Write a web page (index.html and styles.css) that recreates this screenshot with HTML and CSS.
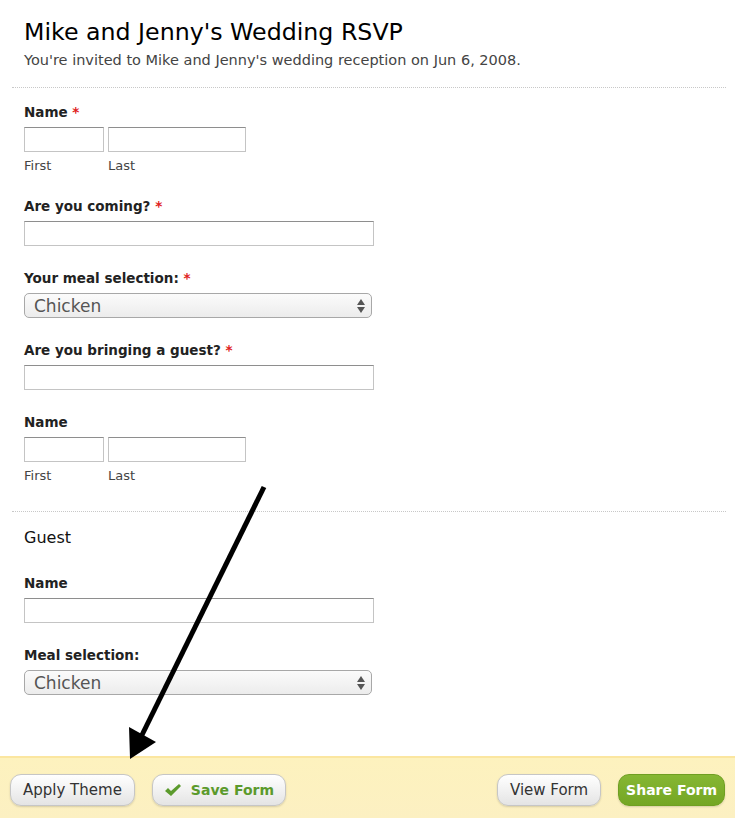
FILE: index.html
```html
<!DOCTYPE html>
<html lang="en">

<head>
    <meta charset="UTF-8">
    <title>Mike and Jenny's Wedding RSVP</title>
    <link rel="stylesheet" href="styles.css">
</head>

<body>
    <div class="form">
        <div class="form-head">
            <h1>Mike and Jenny's Wedding RSVP</h1>
            <p>You're invited to Mike and Jenny's wedding reception on Jun 6, 2008.</p>
        </div>

        <div class="fields">
            <div class="field">
                <label>Name <span class="req">*</span></label>
                <div class="name-row">
                    <span class="part">
                        <input type="text" class="first">
                        <small>First</small>
                    </span>
                    <span class="part">
                        <input type="text" class="last">
                        <small>Last</small>
                    </span>
                </div>
            </div>

            <div class="field">
                <label>Are you coming? <span class="req">*</span></label>
                <input type="text" class="wide">
            </div>

            <div class="field">
                <label>Your meal selection: <span class="req">*</span></label>
                <span class="select-wrap">
                    <select>
                        <option>Chicken</option>
                        <option>Beef</option>
                        <option>Fish</option>
                    </select>
                    <svg class="updown" width="10" height="16" viewBox="0 0 10 16">
                        <path d="M5 1 L9 7 L1 7 Z" fill="#555"/>
                        <path d="M1 9 L9 9 L5 15 Z" fill="#555"/>
                    </svg>
                </span>
            </div>

            <div class="field">
                <label>Are you bringing a guest? <span class="req">*</span></label>
                <input type="text" class="wide">
            </div>

            <div class="field">
                <label>Name</label>
                <div class="name-row">
                    <span class="part">
                        <input type="text" class="first">
                        <small>First</small>
                    </span>
                    <span class="part">
                        <input type="text" class="last">
                        <small>Last</small>
                    </span>
                </div>
            </div>
        </div>

        <div class="section">
            <h3>Guest</h3>

            <div class="field">
                <label>Name</label>
                <input type="text" class="wide">
            </div>

            <div class="field">
                <label>Meal selection:</label>
                <span class="select-wrap">
                    <select>
                        <option>Chicken</option>
                        <option>Beef</option>
                        <option>Fish</option>
                    </select>
                    <svg class="updown" width="10" height="16" viewBox="0 0 10 16">
                        <path d="M5 1 L9 7 L1 7 Z" fill="#555"/>
                        <path d="M1 9 L9 9 L5 15 Z" fill="#555"/>
                    </svg>
                </span>
            </div>
        </div>
    </div>

    <div class="footer">
        <button class="btn">Apply Theme</button>
        <button class="btn save">
            <svg width="18" height="14" viewBox="0 0 18 14">
                <path d="M1 8 L4 5 L7 8 L15 1 L17 3 L7 13 Z" fill="#5b9a2c"/>
            </svg>
            Save Form
        </button>
        <span class="spacer"></span>
        <button class="btn view">View Form</button>
        <button class="btn share">Share Form</button>
    </div>

    <!-- annotation arrow drawn over the page -->
    <svg class="arrow" width="735" height="818" viewBox="0 0 735 818">
        <line x1="264" y1="487" x2="141" y2="737" stroke="#000" stroke-width="5"/>
        <polygon points="129,727 156,742 130,759" fill="#000"/>
    </svg>
</body>

</html>
```

FILE: styles.css
```css
body {
    margin: 0;
    min-height: 100vh;
    display: flex;
    flex-direction: column;
    font-family: 'DejaVu Sans', 'Liberation Sans', sans-serif;
    color: #222;
    background: #fff;
    position: relative;
}

.form {
    margin: 0 9px 0 12px;
}

.form-head {
    padding: 17px 12px 18px;
    border-bottom: 1px dotted #c8c8c8;
}

.form-head h1 {
    margin: 0;
    font-size: 23.7px;
    font-weight: normal;
    line-height: 30px;
    color: #000;
}

.form-head p {
    margin: 4px 0 0;
    font-size: 14.5px;
    line-height: 18px;
    color: #444;
}

.fields {
    padding: 16px 12px 3px;
}

.field {
    margin-bottom: 24px;
}

.field label {
    display: block;
    font-size: 13.5px;
    font-weight: bold;
    line-height: 16px;
    color: #222;
    margin-bottom: 7px;
}

.req {
    color: #e02020;
}

.name-row {
    display: flex;
    gap: 4px;
}

.part {
    display: flex;
    flex-direction: column;
}

.part small {
    font-size: 13px;
    line-height: 16px;
    color: #444;
    margin-top: 6px;
}

input[type=text] {
    box-sizing: border-box;
    height: 25px;
    margin: 0;
    border: 1px solid #c4c4c4;
    border-top-color: #8e8e8e;
    background: #fff;
    font-size: 13px;
}

.first {
    width: 80px;
}

.last {
    width: 138px;
}

.wide {
    width: 350px;
    display: block;
}

.select-wrap {
    position: relative;
    display: block;
    width: 348px;
    margin-top: 8px;
}

.field label + .select-wrap {
    margin-top: 1px;
}

.select-wrap select {
    appearance: none;
    -webkit-appearance: none;
    display: block;
    box-sizing: border-box;
    width: 348px;
    height: 25px;
    margin: 0;
    padding: 0 0 0 9px;
    border: 1px solid #a8a8a8;
    border-radius: 5px;
    background: linear-gradient(#fbfbfb, #ececec);
    font-family: 'DejaVu Sans', sans-serif;
    font-size: 17px;
    color: #555;
}

.updown {
    position: absolute;
    right: 6px;
    top: 5px;
    pointer-events: none;
}

.section {
    border-top: 1px dotted #c8c8c8;
    padding: 16px 12px 0;
}

.section h3 {
    margin: 0 0 27px;
    font-size: 16px;
    font-weight: normal;
    line-height: 20px;
    color: #111;
}

.footer {
    margin-top: auto;
    height: 62px;
    box-sizing: border-box;
    display: flex;
    align-items: center;
    padding: 4px 10px 0;
    gap: 17px;
    border-top: 2px solid #fbe6a0;
    background: linear-gradient(#fdf2be, #fcf0c2);
}

.spacer {
    flex: 1;
}

.btn {
    height: 32px;
    padding: 0 12px;
    border: 1px solid #c6c6c6;
    border-radius: 11px;
    background: linear-gradient(#ffffff, #e4e4e4);
    box-shadow: 0 1px 2px rgba(0, 0, 0, 0.15);
    font-family: 'DejaVu Sans', sans-serif;
    font-size: 15px;
    color: #333;
    display: flex;
    align-items: center;
    gap: 9px;
    cursor: pointer;
}

.save {
    color: #5b9a2c;
    font-size: 14px;
    font-weight: bold;
    padding: 0 11px 0 11px;
}

.view {
    padding: 0 12px;
}

.share {
    background: linear-gradient(#86b733, #74a624);
    border-color: #6f9f22;
    color: #fff;
    font-size: 14px;
    font-weight: bold;
    padding: 0 7px;
}

.arrow {
    position: absolute;
    top: 0;
    left: 0;
    pointer-events: none;
}
```
